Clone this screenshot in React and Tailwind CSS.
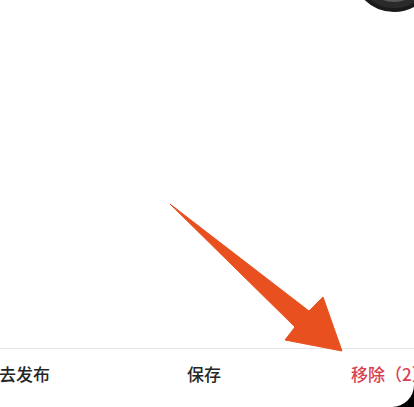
import React from "react";

export default function App() {
  return (
    <div className="relative w-[414px] h-[407px] overflow-hidden bg-black" style={{ fontFamily: '"Noto Sans CJK SC", "Noto Sans", sans-serif' }}>
      <div className="w-full h-full bg-white rounded-br-[22px] flex flex-col">
        <div className="h-[349px] border-b border-[#e6e6e6]" />
        <div className="flex-1 flex items-start pt-[13px] whitespace-nowrap text-[17px] leading-[24px] font-medium">
          <span className="text-[#262626] ml-[-1px]">去发布</span>
          <span className="text-[#262626] ml-[137px]">保存</span>
          <span className="text-[#d8414f] ml-[130px]">移除（2）</span>
        </div>
      </div>
      {/* dark round object at top right */}
      <div className="absolute left-[352px] top-[-72px] w-[84px] h-[84px] rounded-full bg-[#2a2a2a] border-[4px] border-[#1a1a1a] flex items-center justify-center">
        <div className="w-[64px] h-[64px] rounded-full bg-[#5a5a5a]" />
      </div>
      {/* annotation arrow */}
      <svg className="absolute left-0 top-0" width="414" height="407" viewBox="0 0 414 407">
        <polygon
          points="170,204 309,311 323,297 342,351 285,340 295,327"
          fill="#e8511f"
          stroke="#e8511f"
          strokeWidth="1"
          strokeLinejoin="round"
        />
      </svg>
    </div>
  );
}
